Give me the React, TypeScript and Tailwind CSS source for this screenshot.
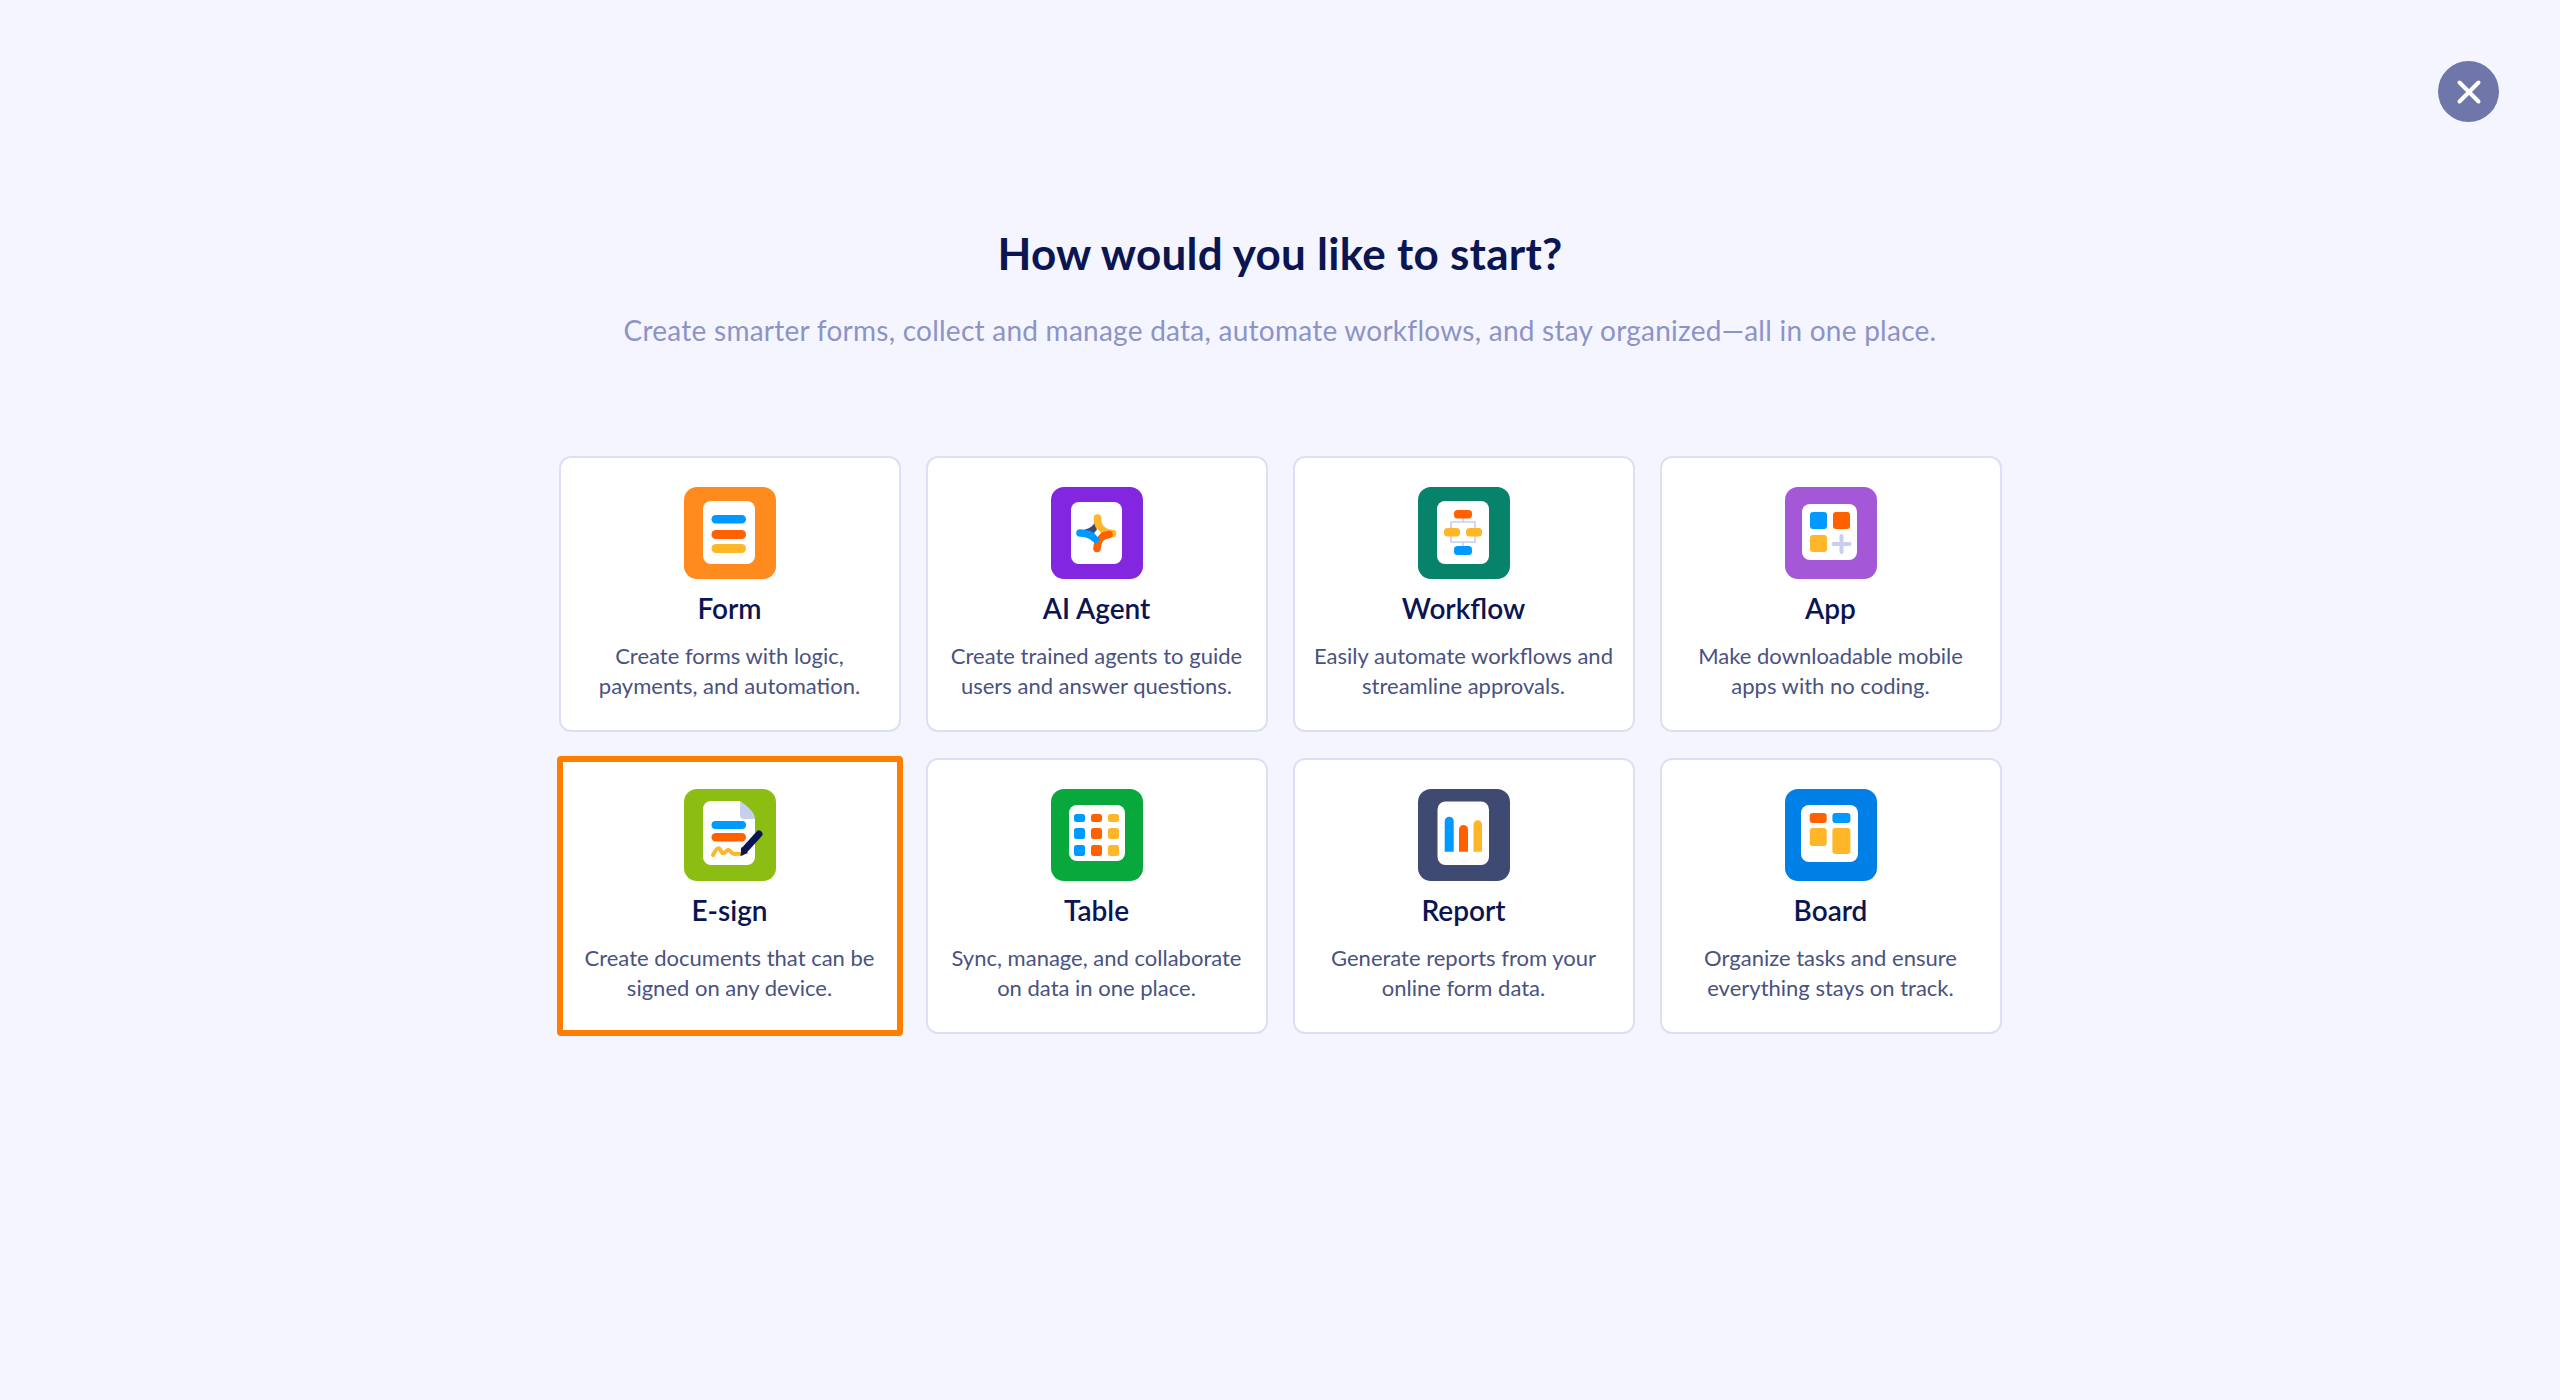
import React from "react";

const BLUE = "#0099ff";
const ORANGE = "#ff6100";
const YELLOW = "#ffb629";
const NAVY = "#0a1551";
const LINE = "#c8ceed";

function Tile({ bg, x, y, w, h, r = 8, children }: { bg: string; x: number; y: number; w: number; h: number; r?: number; children: React.ReactNode }) {
  return (
    <svg width="92" height="92" viewBox="0 0 92 92" aria-hidden="true">
      <rect width="92" height="92" rx="13" fill={bg} />
      <rect x={x} y={y} width={w} height={h} rx={r} fill="#fff" />
      {children}
    </svg>
  );
}

const icons: Record<string, React.ReactNode> = {
  Form: (
    <Tile bg="#ff8a1e" x={19} y={14} w={52} h={63}>
      <rect x="27.5" y="28" width="34.5" height="8.5" rx="4.25" fill={BLUE} />
      <rect x="27.5" y="43" width="34.5" height="9" rx="4.5" fill={ORANGE} />
      <rect x="27.5" y="57" width="34.5" height="9" rx="4.5" fill={YELLOW} />
    </Tile>
  ),
  "AI Agent": (
    <Tile bg="#8227df" x={20} y={15} w={51} h={62}>
      <path d="M46 33 C45 38 41 42 34 44 L45 47 Z" fill="#3e4a72" stroke="#3e4a72" strokeWidth="2.5" strokeLinejoin="round" />
      <path d="M46.5 31 C46.5 39 50 46 61.5 46.5" fill="none" stroke={YELLOW} strokeWidth="7.5" strokeLinecap="round" />
      <path d="M58 47.5 C50 48.5 46.5 53 46 61.5" fill="none" stroke={ORANGE} strokeWidth="7.5" strokeLinecap="round" />
      <path d="M29 46 C35 46 40 47 44.5 52" fill="none" stroke={BLUE} strokeWidth="7.5" strokeLinecap="round" />
      <path d="M46.5 42 L50 46 L46.5 50 L43 46 Z" fill="#fff" />
    </Tile>
  ),
  Workflow: (
    <Tile bg="#07826b" x={19} y={14} w={52} h={63}>
      <path d="M45 31V35M33 41V35H57V41M33 49V55H57V49M45 55V59" fill="none" stroke={LINE} strokeWidth="1.6" />
      <rect x="36" y="23" width="18" height="8.5" rx="3.5" fill={ORANGE} />
      <rect x="26" y="41" width="16" height="8.5" rx="3.5" fill={YELLOW} />
      <rect x="48" y="41" width="16" height="8.5" rx="3.5" fill={YELLOW} />
      <rect x="36" y="59" width="18" height="9" rx="3.5" fill={BLUE} />
    </Tile>
  ),
  App: (
    <Tile bg="#a457d7" x={17} y={17} w={55} h={56}>
      <rect x="25" y="25" width="17" height="17" rx="3" fill={BLUE} />
      <rect x="48" y="25" width="17" height="17" rx="3" fill={ORANGE} />
      <rect x="25" y="48" width="17" height="17" rx="3" fill={YELLOW} />
      <path d="M56.5 49V65M48.5 57H64.5" stroke={LINE} strokeWidth="4" strokeLinecap="round" />
    </Tile>
  ),
  "E-sign": (
    <Tile bg="#8bbd12" x={19} y={12} w={52} h={64}>
      <path d="M56 12 L71 30 L71 12 Z" fill="#8bbd12" />
      <path d="M56 12 Q71 22 71 30 L60 30 Q56 30 56 26 Z" fill={LINE} />
      <rect x="27.5" y="32" width="34.5" height="8" rx="4" fill={BLUE} />
      <rect x="27.5" y="44" width="34.5" height="8.5" rx="4.25" fill={ORANGE} />
      <path d="M29 66 C33 58 35 58 37 62 C39 67 42 62 44 61 C47 60 47 66 51 65 C54 64.5 55 65 58 65" fill="none" stroke={YELLOW} strokeWidth="4" strokeLinecap="round" />
      <path d="M60.5 61 L75 45" fill="none" stroke={NAVY} strokeWidth="7" strokeLinecap="round" />
      <path d="M56.5 67 L57.5 58 L64 64 Z" fill={NAVY} />
    </Tile>
  ),
  Table: (
    <Tile bg="#09a83d" x={18} y={16} w={56} h={56}>
      {[
        [25, 8],
        [39, 11],
        [56, 11],
      ].map(([y, h]) =>
        [
          [23, BLUE],
          [40, ORANGE],
          [57, YELLOW],
        ].map(([x, c]) => <rect key={`${x}-${y}`} x={x as number} y={y} width="11" height={h} rx="2.5" fill={c as string} />)
      )}
    </Tile>
  ),
  Report: (
    <Tile bg="#3e4a72" x={19.5} y={12.5} w={51.5} h={63.5}>
      <path d="M26.7 62.7V32.2a4.5 4.5 0 0 1 9 0V62.7Z" fill={BLUE} />
      <path d="M41 62.7V40.5a4.5 4.5 0 0 1 9 0V62.7Z" fill={ORANGE} />
      <path d="M55.5 62.7V35.5a4.25 4.25 0 0 1 8.5 0V62.7Z" fill={YELLOW} />
    </Tile>
  ),
  Board: (
    <Tile bg="#0080e6" x={16} y={16} w={57} h={57}>
      <rect x="24.7" y="24" width="17" height="10" rx="3" fill={ORANGE} />
      <rect x="47.4" y="24" width="18" height="10" rx="3" fill={BLUE} />
      <rect x="24.7" y="39" width="17" height="18" rx="3" fill={YELLOW} />
      <rect x="47.4" y="39" width="18" height="26" rx="3" fill={YELLOW} />
    </Tile>
  ),
};

const cards = [
  { title: "Form", lines: ["Create forms with logic,", "payments, and automation."] },
  { title: "AI Agent", lines: ["Create trained agents to guide", "users and answer questions."] },
  { title: "Workflow", lines: ["Easily automate workflows and", "streamline approvals."] },
  { title: "App", lines: ["Make downloadable mobile", "apps with no coding."] },
  { title: "E-sign", lines: ["Create documents that can be", "signed on any device."], selected: true },
  { title: "Table", lines: ["Sync, manage, and collaborate", "on data in one place."] },
  { title: "Report", lines: ["Generate reports from your", "online form data."] },
  { title: "Board", lines: ["Organize tasks and ensure", "everything stays on track."] },
];

export default function App() {
  return (
    <div className="relative min-h-[1400px] w-full bg-[#f4f5ff] font-['Lato','Liberation_Sans',sans-serif]">
      <button
        aria-label="Close"
        className="absolute right-[61px] top-[61px] flex h-[61px] w-[61px] items-center justify-center rounded-full bg-[#6f76a9]"
      >
        <svg width="26" height="26" viewBox="0 0 26 26" fill="none" stroke="#fff" strokeWidth="4" strokeLinecap="round">
          <path d="M3.5 3.5L22.5 22.5M22.5 3.5L3.5 22.5" />
        </svg>
      </button>

      <div className="flex flex-col items-center pt-[226px]">
        <h1 className="text-[44px] font-bold leading-[54px] tracking-[0.25px] text-[#0a1551]">How would you like to start?</h1>
        <p className="mt-[31px] text-[28px] leading-[38px] tracking-[0.25px] text-[#8d93c7]">
          Create smarter forms, collect and manage data, automate workflows, and stay organized—all in one place.
        </p>

        <div className="mt-[107px] grid grid-cols-[repeat(4,342px)] gap-x-[25px] gap-y-[26px]">
          {cards.map((c) => (
            <div
              key={c.title}
              className={
                c.selected
                  ? "box-border flex h-[276px] flex-col items-center rounded-[2px] border-2 border-transparent bg-white pt-[29px] outline-[6px] outline-offset-[-4px] outline-[#ff7e00]"
                  : "box-border flex h-[276px] flex-col items-center rounded-[12px] border-2 border-[#dcdff5] bg-white pt-[29px]"
              }
            >
              <div className="h-[92px] w-[92px]">{icons[c.title]}</div>
              <h2 className="mt-[11px] text-[28px] font-semibold leading-[36px] text-[#0a1551]">{c.title}</h2>
              <p className="mt-[15px] text-center text-[22px] leading-[30px] text-[#4a5280]">
                {c.lines[0]}
                <br />
                {c.lines[1]}
              </p>
            </div>
          ))}
        </div>
      </div>
    </div>
  );
}
